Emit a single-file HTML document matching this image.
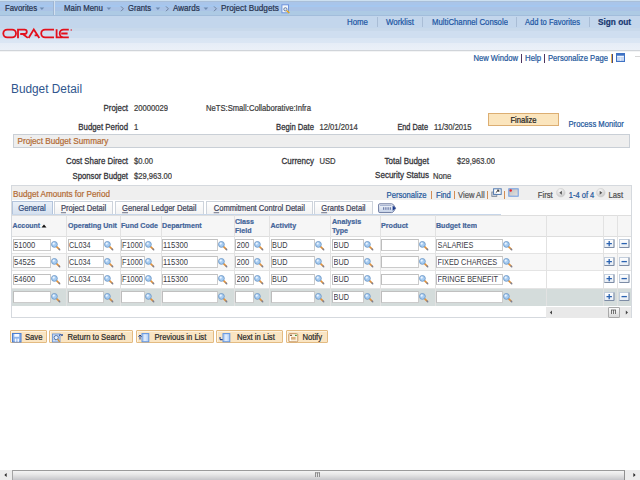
<!DOCTYPE html>
<html><head><meta charset="utf-8"><style>
html,body{margin:0;padding:0;width:640px;height:480px;overflow:hidden;background:#fff;}
.t{position:absolute;white-space:nowrap;font-family:"Liberation Sans",sans-serif;-webkit-text-stroke:0.2px currentColor;}
.r{position:absolute;display:block;}
u{text-decoration:underline;text-underline-offset:0.5px;text-decoration-thickness:0.6px;text-decoration-color:#7a7e90;}
</style></head><body>
<div class="r" style="left:0px;top:0px;width:640px;height:16px;background:linear-gradient(#cde0f0 0,#cde0f0 1px,#a9bfd9 1px,#a9bfd9 2px,#a9c5ea 2px,#a9c5ea 5px,#a5c7ef 5px,#a5c7ef 7px,#aac3e6 7px,#aac3e6 11px,#adcae4 11px,#adcae4 15px,#a2bddb 15px,#a2bddb 16px);"></div>
<div class="r" style="left:53px;top:1px;width:1px;height:14px;background:#9fb6d2;"></div>
<div class="r" style="left:54px;top:1px;width:1px;height:14px;background:#d3e0ef;"></div>
<div class="t" style="left:5px;top:3.40px;font-size:7.8px;line-height:12px;font-weight:normal;color:#27344f;transform-origin:0 8px;transform:scaleY(1.12);">Favorites</div>
<div class="t" style="left:64px;top:3.40px;font-size:7.85px;line-height:12px;font-weight:normal;color:#27344f;transform-origin:0 8px;transform:scaleY(1.12);">Main Menu</div>
<div class="t" style="left:128px;top:3.40px;font-size:7.7px;line-height:12px;font-weight:normal;color:#27344f;transform-origin:0 8px;transform:scaleY(1.12);">Grants</div>
<div class="t" style="left:173px;top:3.40px;font-size:8.1px;line-height:12px;font-weight:normal;color:#27344f;transform-origin:0 8px;transform:scaleY(1.12);">Awards</div>
<div class="t" style="left:221px;top:3.20px;font-size:8.2px;line-height:12px;font-weight:normal;color:#27344f;transform-origin:0 8px;transform:scaleY(1.12);">Project Budgets</div>
<svg class="r" style="left:38.8px;top:6.6px" width="6" height="4" viewBox="0 0 6 4"><path d="M0.6 0.5 L5.2 0.5 L2.9 3 Z" fill="#6f8db3"/></svg>
<svg class="r" style="left:106px;top:6.6px" width="6" height="4" viewBox="0 0 6 4"><path d="M0.6 0.5 L5.2 0.5 L2.9 3 Z" fill="#6f8db3"/></svg>
<svg class="r" style="left:155.2px;top:6.6px" width="6" height="4" viewBox="0 0 6 4"><path d="M0.6 0.5 L5.2 0.5 L2.9 3 Z" fill="#6f8db3"/></svg>
<svg class="r" style="left:202.8px;top:6.6px" width="6" height="4" viewBox="0 0 6 4"><path d="M0.6 0.5 L5.2 0.5 L2.9 3 Z" fill="#6f8db3"/></svg>
<svg class="r" style="left:119.5px;top:5px" width="5" height="8" viewBox="0 0 5 8"><path d="M1 1.4 L3.4 3.8 L1 6.2" fill="none" stroke="#6b7d98" stroke-width="0.95"/></svg>
<svg class="r" style="left:164.5px;top:5px" width="5" height="8" viewBox="0 0 5 8"><path d="M1 1.4 L3.4 3.8 L1 6.2" fill="none" stroke="#6b7d98" stroke-width="0.95"/></svg>
<svg class="r" style="left:212.5px;top:5px" width="5" height="8" viewBox="0 0 5 8"><path d="M1 1.4 L3.4 3.8 L1 6.2" fill="none" stroke="#6b7d98" stroke-width="0.95"/></svg>
<svg class="r" style="left:280.5px;top:3.8px" width="10" height="10" viewBox="0 0 10 10"><rect x="0.9" y="0.8" width="6.6" height="8" fill="#f4f7fc" stroke="#6d93dc" stroke-width="1"/><circle cx="4.4" cy="5.3" r="1.6" fill="#dfe8f4" stroke="#5a6f95" stroke-width="0.9"/><path d="M5.6 6.6 L8.4 9" stroke="#e8a81c" stroke-width="1.4"/></svg>
<div class="r" style="left:0px;top:16px;width:640px;height:34px;background:linear-gradient(#c3d6ec 0,#c3d6ec 11.5px,#c8d9eb 12.5px,#c9d9eb 14.5px,#cfdef0 15.5px,#cfdef0 21.5px,#d9e5f3 22.5px,#dbe6f4 26.5px,#e6edf7 27.5px,#ebf0f8 34px);"></div>
<div class="r" style="left:0px;top:50px;width:640px;height:1px;background:#d0d4d9;"></div>
<div class="r" style="left:0px;top:51px;width:640px;height:1px;background:#f3f4f5;"></div>
<svg class="r" style="left:0px;top:27px" width="74" height="13" viewBox="0 0 74 13"><g fill="none" stroke="#e3101c" stroke-width="1.8"><path d="M7.2 2.6 H12.1 A3.9 3.9 0 0 1 12.1 10.4 H7.2 A3.9 3.9 0 0 1 7.2 2.6 Z"/><path d="M18 11.2 V2.6 H24.6 A2.2 2.2 0 0 1 24.6 7 H20.2 M22.8 7 L27.8 10.9"/><path d="M28.6 11 L33.8 2.4 L39.3 11 M34.6 8.4 H37.6"/><path d="M54 10.4 H45.1 A3.9 3.9 0 0 1 45.1 2.6 H54"/><path d="M56.6 2.2 V10.4 H62.4"/><path d="M68.8 10.4 H63.6 A3.9 3.9 0 0 1 63.6 2.6 H68.8 M61.2 6.5 H67.6"/></g><circle cx="71.2" cy="3" r="0.7" fill="#e3101c"/></svg>
<div class="t" style="left:347px;top:17.10px;font-size:7.87px;line-height:12px;font-weight:normal;color:#2157a4;transform-origin:0 8px;transform:scaleY(1.12);">Home</div>
<div class="t" style="left:386px;top:17.10px;font-size:7.92px;line-height:12px;font-weight:normal;color:#2157a4;transform-origin:0 8px;transform:scaleY(1.12);">Worklist</div>
<div class="t" style="left:432px;top:17.10px;font-size:7.77px;line-height:12px;font-weight:normal;color:#2157a4;transform-origin:0 8px;transform:scaleY(1.12);">MultiChannel Console</div>
<div class="t" style="left:525px;top:17.10px;font-size:7.55px;line-height:12px;font-weight:normal;color:#2157a4;transform-origin:0 8px;transform:scaleY(1.12);">Add to Favorites</div>
<div class="t" style="left:598px;top:17.30px;font-size:8.25px;line-height:12px;font-weight:bold;color:#173670;transform-origin:0 8px;transform:scaleY(1.12);">Sign out</div>
<div class="r" style="left:377px;top:17px;width:1px;height:10px;background:#a9bdd6;"></div>
<div class="r" style="left:422px;top:17px;width:1px;height:10px;background:#a9bdd6;"></div>
<div class="r" style="left:516px;top:17px;width:1px;height:10px;background:#a9bdd6;"></div>
<div class="r" style="left:589px;top:17px;width:1px;height:10px;background:#a9bdd6;"></div>
<div class="t" style="left:473.5px;top:53.20px;font-size:7.63px;line-height:12px;font-weight:normal;color:#24589c;transform-origin:0 8px;transform:scaleY(1.12);">New Window</div>
<div class="r" style="left:521px;top:54px;width:1px;height:9px;background:#4d3560;"></div>
<div class="t" style="left:525px;top:53.20px;font-size:7.8px;line-height:12px;font-weight:normal;color:#24589c;transform-origin:0 8px;transform:scaleY(1.12);">Help</div>
<div class="r" style="left:544px;top:54px;width:1px;height:9px;background:#4d3560;"></div>
<div class="t" style="left:548px;top:53.20px;font-size:7.65px;line-height:12px;font-weight:normal;color:#24589c;transform-origin:0 8px;transform:scaleY(1.12);">Personalize Page</div>
<div class="r" style="left:611px;top:54px;width:2px;height:9px;background:linear-gradient(90deg,#e8b050 50%,#3c4c90 50%);"></div>
<svg class="r" style="left:616px;top:53px" width="9" height="9" viewBox="0 0 9 9"><rect x="0.5" y="0.5" width="8" height="8" fill="#b8cdee" stroke="#3f72c4" stroke-width="1"/><rect x="1" y="1" width="7" height="1.6" fill="#3f72c4"/><rect x="1.2" y="3.2" width="6.6" height="1" fill="#fff"/><path d="M1 6 H8 M4.5 4.5 V8" stroke="#e6eefb" stroke-width="0.8"/></svg>
<div class="r" style="left:635px;top:56px;width:5px;height:1px;background:#d6d6d6;"></div>
<div class="t" style="left:11px;top:80.50px;font-size:11.83px;line-height:16px;font-weight:normal;color:#30568e;transform-origin:0 12px;transform:scaleY(1.12);-webkit-text-stroke:0;">Budget Detail</div>
<div class="t" style="right:512px;top:103.40px;font-size:7.87px;line-height:12px;font-weight:normal;color:#333338;transform-origin:0 8px;transform:scaleY(1.12);-webkit-text-stroke:0.25px currentColor;">Project</div>
<div class="t" style="left:134px;top:103.40px;font-size:7.64px;line-height:12px;font-weight:normal;color:#3c3c3c;transform-origin:0 8px;transform:scaleY(1.12);">20000029</div>
<div class="t" style="left:206px;top:103.40px;font-size:7.65px;line-height:12px;font-weight:normal;color:#3c3c3c;transform-origin:0 8px;transform:scaleY(1.12);">NeTS:Small:Collaborative:Infra</div>
<div class="t" style="right:512px;top:121.60px;font-size:7.85px;line-height:12px;font-weight:normal;color:#333338;transform-origin:0 8px;transform:scaleY(1.12);-webkit-text-stroke:0.25px currentColor;">Budget Period</div>
<div class="t" style="left:134px;top:121.60px;font-size:7.64px;line-height:12px;font-weight:normal;color:#3c3c3c;transform-origin:0 8px;transform:scaleY(1.12);">1</div>
<div class="t" style="right:326px;top:121.60px;font-size:7.68px;line-height:12px;font-weight:normal;color:#333338;transform-origin:0 8px;transform:scaleY(1.12);-webkit-text-stroke:0.25px currentColor;">Begin Date</div>
<div class="t" style="left:319.5px;top:121.60px;font-size:7.64px;line-height:12px;font-weight:normal;color:#3c3c3c;transform-origin:0 8px;transform:scaleY(1.12);">12/01/2014</div>
<div class="t" style="right:212px;top:121.60px;font-size:7.35px;line-height:12px;font-weight:normal;color:#333338;transform-origin:0 8px;transform:scaleY(1.12);-webkit-text-stroke:0.25px currentColor;">End Date</div>
<div class="t" style="left:434px;top:121.60px;font-size:7.64px;line-height:12px;font-weight:normal;color:#3c3c3c;transform-origin:0 8px;transform:scaleY(1.12);">11/30/2015</div>
<div class="r" style="left:488px;top:113px;width:71px;height:13px;box-sizing:border-box;background:#fbe5bd;border:1px solid #dcae72;"></div>
<div class="t" style="left:523.5px;top:114.80px;font-size:7.6px;line-height:12px;font-weight:normal;color:#222;transform-origin:0 8px;transform:translateX(-50%) scaleY(1.12);">Finalize</div>
<div class="t" style="left:568.5px;top:119.00px;font-size:7.68px;line-height:12px;font-weight:normal;color:#24589c;transform-origin:0 8px;transform:scaleY(1.12);">Process Monitor</div>
<div class="r" style="left:13px;top:134px;width:617px;height:14px;box-sizing:border-box;background:#eeeeee;border:1px solid #c9cfd6;"></div>
<div class="t" style="left:17.5px;top:136.20px;font-size:8.19px;line-height:12px;font-weight:normal;color:#b36b34;transform-origin:0 8px;transform:scaleY(1.12);">Project Budget Summary</div>
<div class="t" style="right:512px;top:155.60px;font-size:7.86px;line-height:12px;font-weight:normal;color:#333338;transform-origin:0 8px;transform:scaleY(1.12);-webkit-text-stroke:0.25px currentColor;">Cost Share Direct</div>
<div class="t" style="left:134px;top:155.60px;font-size:7.64px;line-height:12px;font-weight:normal;color:#3c3c3c;transform-origin:0 8px;transform:scaleY(1.12);">$0.00</div>
<div class="t" style="right:326px;top:155.60px;font-size:8.0px;line-height:12px;font-weight:normal;color:#333338;transform-origin:0 8px;transform:scaleY(1.12);-webkit-text-stroke:0.25px currentColor;">Currency</div>
<div class="t" style="left:319.5px;top:155.60px;font-size:7.64px;line-height:12px;font-weight:normal;color:#3c3c3c;transform-origin:0 8px;transform:scaleY(1.12);">USD</div>
<div class="t" style="right:211px;top:155.60px;font-size:8.0px;line-height:12px;font-weight:normal;color:#333338;transform-origin:0 8px;transform:scaleY(1.12);-webkit-text-stroke:0.25px currentColor;">Total Budget</div>
<div class="t" style="left:457px;top:155.60px;font-size:7.59px;line-height:12px;font-weight:normal;color:#3c3c3c;transform-origin:0 8px;transform:scaleY(1.12);">$29,963.00</div>
<div class="t" style="right:512px;top:170.60px;font-size:7.74px;line-height:12px;font-weight:normal;color:#333338;transform-origin:0 8px;transform:scaleY(1.12);-webkit-text-stroke:0.25px currentColor;">Sponsor Budget</div>
<div class="t" style="left:134px;top:170.60px;font-size:7.59px;line-height:12px;font-weight:normal;color:#3c3c3c;transform-origin:0 8px;transform:scaleY(1.12);">$29,963.00</div>
<div class="t" style="right:211px;top:169.60px;font-size:8.03px;line-height:12px;font-weight:normal;color:#333338;transform-origin:0 8px;transform:scaleY(1.12);-webkit-text-stroke:0.25px currentColor;">Security Status</div>
<div class="t" style="left:433px;top:170.60px;font-size:7.64px;line-height:12px;font-weight:normal;color:#3c3c3c;transform-origin:0 8px;transform:scaleY(1.12);">None</div>
<div class="r" style="left:10.5px;top:185px;width:621.5px;height:133px;box-sizing:border-box;border:1px solid #d5d9de;background:#fff;"></div>
<div class="r" style="left:11.5px;top:186px;width:619.5px;height:14px;background:#efefef;"></div>
<div class="t" style="left:13px;top:189.00px;font-size:8.12px;line-height:12px;font-weight:normal;color:#b36b34;transform-origin:0 8px;transform:scaleY(1.12);">Budget Amounts for Period</div>
<div class="t" style="left:386.6px;top:189.50px;font-size:7.65px;line-height:12px;font-weight:normal;color:#24589c;transform-origin:0 8px;transform:scaleY(1.12);">Personalize</div>
<div class="r" style="left:431px;top:190.8px;width:1px;height:8px;background:#d38d55;"></div>
<div class="t" style="left:436px;top:189.50px;font-size:7.65px;line-height:12px;font-weight:normal;color:#24589c;transform-origin:0 8px;transform:scaleY(1.12);">Find</div>
<div class="r" style="left:454px;top:190.8px;width:1px;height:8px;background:#d38d55;"></div>
<div class="t" style="left:458px;top:189.50px;font-size:7.65px;line-height:12px;font-weight:normal;color:#555;transform-origin:0 8px;transform:scaleY(1.12);">View All</div>
<div class="r" style="left:487px;top:190.8px;width:1px;height:8px;background:#d38d55;"></div>
<svg class="r" style="left:490.5px;top:187.5px" width="11" height="9" viewBox="0 0 11 9"><rect x="0.8" y="4" width="5" height="4.5" fill="#c9ced6" stroke="#7d8796" stroke-width="0.8"/><rect x="2.6" y="0.8" width="7.6" height="5.6" fill="#ffffff" stroke="#4f78b0" stroke-width="1"/><path d="M4.8 4.6 L7.6 2.2 M6 2.2 H7.8 V4" fill="none" stroke="#222" stroke-width="0.9"/></svg>
<div class="r" style="left:504px;top:190.8px;width:1px;height:8px;background:#d38d55;"></div>
<svg class="r" style="left:507.5px;top:187.5px" width="11" height="9" viewBox="0 0 11 9"><defs><linearGradient id="sg" x1="0" y1="0" x2="1" y2="1"><stop offset="0" stop-color="#bdbdbd"/><stop offset="1" stop-color="#e4e4e4"/></linearGradient></defs><rect x="0.8" y="0.8" width="9.4" height="7.4" fill="url(#sg)" stroke="#6d9be0" stroke-width="1"/><circle cx="2.7" cy="2.5" r="1.2" fill="#e8202a"/></svg>
<div class="t" style="left:537.8px;top:189.50px;font-size:7.7px;line-height:12px;font-weight:normal;color:#505050;transform-origin:0 8px;transform:scaleY(1.12);">First</div>
<svg class="r" style="left:555.6px;top:187.6px" width="10" height="10" viewBox="0 0 10 10"><defs><radialGradient id="cg" cx="0.4" cy="0.3" r="0.75"><stop offset="0" stop-color="#fafafa"/><stop offset="1" stop-color="#c4c4c4"/></radialGradient></defs><circle cx="4.8" cy="4.7" r="4.3" fill="url(#cg)" stroke="#d0d0d0" stroke-width="0.6"/><path d="M5.9 2.7 L3.3 4.7 L5.9 6.7 Z" fill="#555"/></svg>
<div class="t" style="left:568.8px;top:189.50px;font-size:7.5px;line-height:12px;font-weight:normal;color:#24589c;transform-origin:0 8px;transform:scaleY(1.12);">1-4 of 4</div>
<svg class="r" style="left:596.3px;top:187.6px" width="10" height="10" viewBox="0 0 10 10"><defs><radialGradient id="cg2" cx="0.4" cy="0.3" r="0.75"><stop offset="0" stop-color="#fafafa"/><stop offset="1" stop-color="#c4c4c4"/></radialGradient></defs><circle cx="4.8" cy="4.7" r="4.3" fill="url(#cg2)" stroke="#d0d0d0" stroke-width="0.6"/><path d="M3.7 2.7 L6.3 4.7 L3.7 6.7 Z" fill="#555"/></svg>
<div class="t" style="left:608.5px;top:189.50px;font-size:7.7px;line-height:12px;font-weight:normal;color:#505050;transform-origin:0 8px;transform:scaleY(1.12);">Last</div>
<div class="r" style="left:11.5px;top:200px;width:489px;height:1px;background:transparent;"></div>
<div class="r" style="left:11.5px;top:200.5px;width:41.0px;height:14.5px;box-sizing:border-box;background:linear-gradient(#eaf0f8,#d3dfee);border:1px solid #b3c4dc;border-bottom:none;"></div>
<div class="t" style="left:32.0px;top:203.40px;font-size:7.75px;line-height:12px;font-weight:normal;color:#2f4c7c;transform-origin:0 8px;transform:translateX(-50%) scaleY(1.12);">General</div>
<div class="r" style="left:54px;top:201px;width:59px;height:13.5px;box-sizing:border-box;background:linear-gradient(#ffffff,#f1f1f1);border:1px solid #cdd3db;border-bottom:none;"></div>
<div class="t" style="left:83.5px;top:203.40px;font-size:7.6px;line-height:12px;font-weight:normal;color:#3e4358;transform-origin:0 8px;transform:translateX(-50%) scaleY(1.12);"><u>P</u>roject Detail</div>
<div class="r" style="left:115px;top:201px;width:88.5px;height:13.5px;box-sizing:border-box;background:linear-gradient(#ffffff,#f1f1f1);border:1px solid #cdd3db;border-bottom:none;"></div>
<div class="t" style="left:159.25px;top:203.40px;font-size:7.6px;line-height:12px;font-weight:normal;color:#3e4358;transform-origin:0 8px;transform:translateX(-50%) scaleY(1.12);"><u>G</u>eneral Ledger Detail</div>
<div class="r" style="left:206px;top:201px;width:106.5px;height:13.5px;box-sizing:border-box;background:linear-gradient(#ffffff,#f1f1f1);border:1px solid #cdd3db;border-bottom:none;"></div>
<div class="t" style="left:259.25px;top:203.40px;font-size:7.6px;line-height:12px;font-weight:normal;color:#3e4358;transform-origin:0 8px;transform:translateX(-50%) scaleY(1.12);"><u>C</u>ommitment Control Detail</div>
<div class="r" style="left:314px;top:201px;width:58.75px;height:13.5px;box-sizing:border-box;background:linear-gradient(#ffffff,#f1f1f1);border:1px solid #cdd3db;border-bottom:none;"></div>
<div class="t" style="left:343.375px;top:203.40px;font-size:7.6px;line-height:12px;font-weight:normal;color:#3e4358;transform-origin:0 8px;transform:translateX(-50%) scaleY(1.12);"><u>G</u>rants Detail</div>
<svg class="r" style="left:378px;top:202.5px" width="19" height="11" viewBox="0 0 19 11"><defs><linearGradient id="tg" x1="0" y1="0" x2="0" y2="1"><stop offset="0" stop-color="#f7f9fd"/><stop offset="1" stop-color="#c3d0e6"/></linearGradient></defs><path d="M1.8 0.8 H13.6 Q14.8 0.8 15.6 2 L17.6 5.2 L15.6 8.4 Q14.8 9.6 13.6 9.6 H1.8 Q0.6 9.6 0.6 8.4 V2 Q0.6 0.8 1.8 0.8 Z" fill="url(#tg)" stroke="#5c6b94" stroke-width="0.9"/><path d="M2 2.4 H13.5" stroke="#8ea0c4" stroke-width="0.8"/><g fill="#56679a"><rect x="5.2" y="4.2" width="1" height="2.6"/><rect x="7.4" y="4.2" width="1" height="2.6"/><rect x="9.6" y="4.2" width="1" height="2.6"/><rect x="11.8" y="4.2" width="1" height="2.6"/></g><path d="M14.6 2.6 L17.7 5.2 L14.6 7.8 Z" fill="#1b3a8c"/></svg>
<div class="r" style="left:11.5px;top:213.5px;width:489px;height:1.5px;background:#c7d6e9;"></div>
<div class="r" style="left:11.5px;top:215px;width:619.5px;height:21px;background:#f6f6f6;border-top:1px solid #dedede;box-sizing:border-box;"></div>
<div class="r" style="left:11.5px;top:235.5px;width:619.5px;height:1px;background:#dedede;"></div>
<div class="r" style="left:11.5px;top:236.5px;width:619.5px;height:16.5px;background:#ffffff;"></div>
<div class="r" style="left:11.5px;top:253px;width:619.5px;height:17.5px;background:#f7f7f7;"></div>
<div class="r" style="left:11.5px;top:270.5px;width:619.5px;height:17.5px;background:#ffffff;"></div>
<div class="r" style="left:11.5px;top:288px;width:619.5px;height:17.5px;background:#d4dcdb;"></div>
<div class="r" style="left:11.5px;top:252.5px;width:619.5px;height:1px;background:#e4e4e4;"></div>
<div class="r" style="left:11.5px;top:270.0px;width:619.5px;height:1px;background:#e4e4e4;"></div>
<div class="r" style="left:11.5px;top:287.5px;width:619.5px;height:1px;background:#e4e4e4;"></div>
<div class="r" style="left:66px;top:215px;width:1px;height:90.5px;background:#e2e2e2;"></div>
<div class="r" style="left:119.5px;top:215px;width:1px;height:90.5px;background:#e2e2e2;"></div>
<div class="r" style="left:160.5px;top:215px;width:1px;height:90.5px;background:#e2e2e2;"></div>
<div class="r" style="left:233.5px;top:215px;width:1px;height:90.5px;background:#e2e2e2;"></div>
<div class="r" style="left:269px;top:215px;width:1px;height:90.5px;background:#e2e2e2;"></div>
<div class="r" style="left:330px;top:215px;width:1px;height:90.5px;background:#e2e2e2;"></div>
<div class="r" style="left:379.5px;top:215px;width:1px;height:90.5px;background:#e2e2e2;"></div>
<div class="r" style="left:434.5px;top:215px;width:1px;height:90.5px;background:#e2e2e2;"></div>
<div class="r" style="left:545.5px;top:215px;width:1px;height:90.5px;background:#e2e2e2;"></div>
<div class="r" style="left:602.5px;top:215px;width:1px;height:90.5px;background:#e2e2e2;"></div>
<div class="r" style="left:616.5px;top:215px;width:1px;height:90.5px;background:#e2e2e2;"></div>
<div class="t" style="left:12.5px;top:220.30px;font-size:6.9px;line-height:12px;font-weight:bold;color:#44659a;transform-origin:0 8px;transform:scaleY(1.05);">Account</div>
<svg class="r" style="left:40.6px;top:224px" width="6" height="4" viewBox="0 0 6 4"><path d="M0.5 3.5 L3 0.5 L5.5 3.5 Z" fill="#111"/></svg>
<div class="t" style="left:68px;top:220.30px;font-size:7.06px;line-height:12px;font-weight:bold;color:#44659a;transform-origin:0 8px;transform:scaleY(1.05);">Operating Unit</div>
<div class="t" style="left:121px;top:220.30px;font-size:7.1px;line-height:12px;font-weight:bold;color:#44659a;transform-origin:0 8px;transform:scaleY(1.05);">Fund Code</div>
<div class="t" style="left:162px;top:220.30px;font-size:7.15px;line-height:12px;font-weight:bold;color:#44659a;transform-origin:0 8px;transform:scaleY(1.05);">Department</div>
<div class="t" style="left:235px;top:216.00px;font-size:7.1px;line-height:12px;font-weight:bold;color:#44659a;transform-origin:0 8px;transform:scaleY(1.05);">Class</div>
<div class="t" style="left:235px;top:224.50px;font-size:7.1px;line-height:12px;font-weight:bold;color:#44659a;transform-origin:0 8px;transform:scaleY(1.05);">Field</div>
<div class="t" style="left:270.5px;top:220.30px;font-size:7.1px;line-height:12px;font-weight:bold;color:#44659a;transform-origin:0 8px;transform:scaleY(1.05);">Activity</div>
<div class="t" style="left:332px;top:216.00px;font-size:7.1px;line-height:12px;font-weight:bold;color:#44659a;transform-origin:0 8px;transform:scaleY(1.05);">Analysis</div>
<div class="t" style="left:332px;top:224.50px;font-size:7.1px;line-height:12px;font-weight:bold;color:#44659a;transform-origin:0 8px;transform:scaleY(1.05);">Type</div>
<div class="t" style="left:381px;top:220.30px;font-size:7.15px;line-height:12px;font-weight:bold;color:#44659a;transform-origin:0 8px;transform:scaleY(1.05);">Product</div>
<div class="t" style="left:436px;top:220.30px;font-size:7.1px;line-height:12px;font-weight:bold;color:#44659a;transform-origin:0 8px;transform:scaleY(1.05);">Budget Item</div>
<div class="r" style="left:13px;top:239px;width:38px;height:11.5px;box-sizing:border-box;background:#fff;border:1px solid #cbcbcb;border-top-color:#c0c0c0;border-left-color:#bdbdbd;"></div>
<div class="t" style="left:14.1px;top:240.40px;font-size:7.6px;line-height:12px;font-weight:normal;color:#3a3a44;transform-origin:0 8px;transform:scaleY(1.12);width:36.0px;overflow:hidden;-webkit-text-stroke:0;">51000</div>
<svg class="r" style="left:51px;top:240.5px" width="10" height="10" viewBox="0 0 10 10"><path d="M5.3 5.3 L8.4 8.4" stroke="#e0923c" stroke-width="1.7" stroke-linecap="round"/><path d="M7.9 7.9 L8.8 8.8" stroke="#6a7fa8" stroke-width="1.2" stroke-linecap="round"/><circle cx="3.4" cy="3.4" r="2.9" fill="#a8cdf2" stroke="#6f98c6" stroke-width="0.9"/><circle cx="2.7" cy="2.6" r="1.1" fill="#eef6ff"/></svg>
<div class="r" style="left:68px;top:239px;width:36px;height:11.5px;box-sizing:border-box;background:#fff;border:1px solid #cbcbcb;border-top-color:#c0c0c0;border-left-color:#bdbdbd;"></div>
<div class="t" style="left:69.1px;top:240.40px;font-size:7.3px;line-height:12px;font-weight:normal;color:#3a3a44;transform-origin:0 8px;transform:scaleY(1.12);width:34.0px;overflow:hidden;-webkit-text-stroke:0;">CL034</div>
<svg class="r" style="left:104px;top:240.5px" width="10" height="10" viewBox="0 0 10 10"><path d="M5.3 5.3 L8.4 8.4" stroke="#e0923c" stroke-width="1.7" stroke-linecap="round"/><path d="M7.9 7.9 L8.8 8.8" stroke="#6a7fa8" stroke-width="1.2" stroke-linecap="round"/><circle cx="3.4" cy="3.4" r="2.9" fill="#a8cdf2" stroke="#6f98c6" stroke-width="0.9"/><circle cx="2.7" cy="2.6" r="1.1" fill="#eef6ff"/></svg>
<div class="r" style="left:121px;top:239px;width:24px;height:11.5px;box-sizing:border-box;background:#fff;border:1px solid #cbcbcb;border-top-color:#c0c0c0;border-left-color:#bdbdbd;"></div>
<div class="t" style="left:122.1px;top:240.40px;font-size:7.3px;line-height:12px;font-weight:normal;color:#3a3a44;transform-origin:0 8px;transform:scaleY(1.12);width:22.0px;overflow:hidden;-webkit-text-stroke:0;">F1000</div>
<svg class="r" style="left:145px;top:240.5px" width="10" height="10" viewBox="0 0 10 10"><path d="M5.3 5.3 L8.4 8.4" stroke="#e0923c" stroke-width="1.7" stroke-linecap="round"/><path d="M7.9 7.9 L8.8 8.8" stroke="#6a7fa8" stroke-width="1.2" stroke-linecap="round"/><circle cx="3.4" cy="3.4" r="2.9" fill="#a8cdf2" stroke="#6f98c6" stroke-width="0.9"/><circle cx="2.7" cy="2.6" r="1.1" fill="#eef6ff"/></svg>
<div class="r" style="left:162px;top:239px;width:56px;height:11.5px;box-sizing:border-box;background:#fff;border:1px solid #cbcbcb;border-top-color:#c0c0c0;border-left-color:#bdbdbd;"></div>
<div class="t" style="left:163.1px;top:240.40px;font-size:7.6px;line-height:12px;font-weight:normal;color:#3a3a44;transform-origin:0 8px;transform:scaleY(1.12);width:54.0px;overflow:hidden;-webkit-text-stroke:0;">115300</div>
<svg class="r" style="left:218px;top:240.5px" width="10" height="10" viewBox="0 0 10 10"><path d="M5.3 5.3 L8.4 8.4" stroke="#e0923c" stroke-width="1.7" stroke-linecap="round"/><path d="M7.9 7.9 L8.8 8.8" stroke="#6a7fa8" stroke-width="1.2" stroke-linecap="round"/><circle cx="3.4" cy="3.4" r="2.9" fill="#a8cdf2" stroke="#6f98c6" stroke-width="0.9"/><circle cx="2.7" cy="2.6" r="1.1" fill="#eef6ff"/></svg>
<div class="r" style="left:235px;top:239px;width:19px;height:11.5px;box-sizing:border-box;background:#fff;border:1px solid #cbcbcb;border-top-color:#c0c0c0;border-left-color:#bdbdbd;"></div>
<div class="t" style="left:236.6px;top:240.40px;font-size:7.6px;line-height:12px;font-weight:normal;color:#3a3a44;transform-origin:0 8px;transform:scaleY(1.12);width:16.5px;overflow:hidden;-webkit-text-stroke:0;">200</div>
<svg class="r" style="left:254px;top:240.5px" width="10" height="10" viewBox="0 0 10 10"><path d="M5.3 5.3 L8.4 8.4" stroke="#e0923c" stroke-width="1.7" stroke-linecap="round"/><path d="M7.9 7.9 L8.8 8.8" stroke="#6a7fa8" stroke-width="1.2" stroke-linecap="round"/><circle cx="3.4" cy="3.4" r="2.9" fill="#a8cdf2" stroke="#6f98c6" stroke-width="0.9"/><circle cx="2.7" cy="2.6" r="1.1" fill="#eef6ff"/></svg>
<div class="r" style="left:271px;top:239px;width:44px;height:11.5px;box-sizing:border-box;background:#fff;border:1px solid #cbcbcb;border-top-color:#c0c0c0;border-left-color:#bdbdbd;"></div>
<div class="t" style="left:272.1px;top:240.40px;font-size:7.3px;line-height:12px;font-weight:normal;color:#3a3a44;transform-origin:0 8px;transform:scaleY(1.12);width:42.25px;overflow:hidden;-webkit-text-stroke:0;">BUD</div>
<svg class="r" style="left:315px;top:240.5px" width="10" height="10" viewBox="0 0 10 10"><path d="M5.3 5.3 L8.4 8.4" stroke="#e0923c" stroke-width="1.7" stroke-linecap="round"/><path d="M7.9 7.9 L8.8 8.8" stroke="#6a7fa8" stroke-width="1.2" stroke-linecap="round"/><circle cx="3.4" cy="3.4" r="2.9" fill="#a8cdf2" stroke="#6f98c6" stroke-width="0.9"/><circle cx="2.7" cy="2.6" r="1.1" fill="#eef6ff"/></svg>
<div class="r" style="left:332px;top:239px;width:32px;height:11.5px;box-sizing:border-box;background:#fff;border:1px solid #cbcbcb;border-top-color:#c0c0c0;border-left-color:#bdbdbd;"></div>
<div class="t" style="left:333.6px;top:240.40px;font-size:7.3px;line-height:12px;font-weight:normal;color:#3a3a44;transform-origin:0 8px;transform:scaleY(1.12);width:29.75px;overflow:hidden;-webkit-text-stroke:0;">BUD</div>
<svg class="r" style="left:364px;top:240.5px" width="10" height="10" viewBox="0 0 10 10"><path d="M5.3 5.3 L8.4 8.4" stroke="#e0923c" stroke-width="1.7" stroke-linecap="round"/><path d="M7.9 7.9 L8.8 8.8" stroke="#6a7fa8" stroke-width="1.2" stroke-linecap="round"/><circle cx="3.4" cy="3.4" r="2.9" fill="#a8cdf2" stroke="#6f98c6" stroke-width="0.9"/><circle cx="2.7" cy="2.6" r="1.1" fill="#eef6ff"/></svg>
<div class="r" style="left:381px;top:239px;width:38px;height:11.5px;box-sizing:border-box;background:#fff;border:1px solid #cbcbcb;border-top-color:#c0c0c0;border-left-color:#bdbdbd;"></div>
<svg class="r" style="left:419px;top:240.5px" width="10" height="10" viewBox="0 0 10 10"><path d="M5.3 5.3 L8.4 8.4" stroke="#e0923c" stroke-width="1.7" stroke-linecap="round"/><path d="M7.9 7.9 L8.8 8.8" stroke="#6a7fa8" stroke-width="1.2" stroke-linecap="round"/><circle cx="3.4" cy="3.4" r="2.9" fill="#a8cdf2" stroke="#6f98c6" stroke-width="0.9"/><circle cx="2.7" cy="2.6" r="1.1" fill="#eef6ff"/></svg>
<div class="r" style="left:436px;top:239px;width:67px;height:11.5px;box-sizing:border-box;background:#fff;border:1px solid #cbcbcb;border-top-color:#c0c0c0;border-left-color:#bdbdbd;"></div>
<div class="t" style="left:437.6px;top:240.40px;font-size:7.3px;line-height:12px;font-weight:normal;color:#3a3a44;transform-origin:0 8px;transform:scaleY(1.12);width:64.75px;overflow:hidden;-webkit-text-stroke:0;">SALARIES</div>
<svg class="r" style="left:503px;top:240.5px" width="10" height="10" viewBox="0 0 10 10"><path d="M5.3 5.3 L8.4 8.4" stroke="#e0923c" stroke-width="1.7" stroke-linecap="round"/><path d="M7.9 7.9 L8.8 8.8" stroke="#6a7fa8" stroke-width="1.2" stroke-linecap="round"/><circle cx="3.4" cy="3.4" r="2.9" fill="#a8cdf2" stroke="#6f98c6" stroke-width="0.9"/><circle cx="2.7" cy="2.6" r="1.1" fill="#eef6ff"/></svg>
<svg class="r" style="left:604.3px;top:238.8px" width="11" height="10" viewBox="0 0 11 10"><defs><linearGradient id="pg" x1="0" y1="0" x2="0" y2="1"><stop offset="0" stop-color="#ffffff"/><stop offset="1" stop-color="#e6ecf4"/></linearGradient></defs><rect x="0.5" y="0.5" width="9.5" height="8" fill="url(#pg)" stroke="#c3cedc" stroke-width="1"/><path d="M10 0.5 V8.5 H0.5" fill="none" stroke="#7d8ca5" stroke-width="1"/><path d="M5.2 1.9 V7.3 M2.5 4.6 H7.9" stroke="#2a62b0" stroke-width="1.3"/></svg>
<svg class="r" style="left:618.5px;top:238.8px" width="11" height="10" viewBox="0 0 11 10"><defs><linearGradient id="pg" x1="0" y1="0" x2="0" y2="1"><stop offset="0" stop-color="#ffffff"/><stop offset="1" stop-color="#e6ecf4"/></linearGradient></defs><rect x="0.5" y="0.5" width="9.5" height="8" fill="url(#pg)" stroke="#c3cedc" stroke-width="1"/><path d="M10 0.5 V8.5 H0.5" fill="none" stroke="#7d8ca5" stroke-width="1"/><path d="M2.5 4.6 H7.9" stroke="#2a62b0" stroke-width="1.3"/></svg>
<div class="r" style="left:13px;top:256px;width:38px;height:11.5px;box-sizing:border-box;background:#fff;border:1px solid #cbcbcb;border-top-color:#c0c0c0;border-left-color:#bdbdbd;"></div>
<div class="t" style="left:14.1px;top:256.90px;font-size:7.6px;line-height:12px;font-weight:normal;color:#3a3a44;transform-origin:0 8px;transform:scaleY(1.12);width:36.0px;overflow:hidden;-webkit-text-stroke:0;">54525</div>
<svg class="r" style="left:51px;top:257.5px" width="10" height="10" viewBox="0 0 10 10"><path d="M5.3 5.3 L8.4 8.4" stroke="#e0923c" stroke-width="1.7" stroke-linecap="round"/><path d="M7.9 7.9 L8.8 8.8" stroke="#6a7fa8" stroke-width="1.2" stroke-linecap="round"/><circle cx="3.4" cy="3.4" r="2.9" fill="#a8cdf2" stroke="#6f98c6" stroke-width="0.9"/><circle cx="2.7" cy="2.6" r="1.1" fill="#eef6ff"/></svg>
<div class="r" style="left:68px;top:256px;width:36px;height:11.5px;box-sizing:border-box;background:#fff;border:1px solid #cbcbcb;border-top-color:#c0c0c0;border-left-color:#bdbdbd;"></div>
<div class="t" style="left:69.1px;top:256.90px;font-size:7.3px;line-height:12px;font-weight:normal;color:#3a3a44;transform-origin:0 8px;transform:scaleY(1.12);width:34.0px;overflow:hidden;-webkit-text-stroke:0;">CL034</div>
<svg class="r" style="left:104px;top:257.5px" width="10" height="10" viewBox="0 0 10 10"><path d="M5.3 5.3 L8.4 8.4" stroke="#e0923c" stroke-width="1.7" stroke-linecap="round"/><path d="M7.9 7.9 L8.8 8.8" stroke="#6a7fa8" stroke-width="1.2" stroke-linecap="round"/><circle cx="3.4" cy="3.4" r="2.9" fill="#a8cdf2" stroke="#6f98c6" stroke-width="0.9"/><circle cx="2.7" cy="2.6" r="1.1" fill="#eef6ff"/></svg>
<div class="r" style="left:121px;top:256px;width:24px;height:11.5px;box-sizing:border-box;background:#fff;border:1px solid #cbcbcb;border-top-color:#c0c0c0;border-left-color:#bdbdbd;"></div>
<div class="t" style="left:122.1px;top:256.90px;font-size:7.3px;line-height:12px;font-weight:normal;color:#3a3a44;transform-origin:0 8px;transform:scaleY(1.12);width:22.0px;overflow:hidden;-webkit-text-stroke:0;">F1000</div>
<svg class="r" style="left:145px;top:257.5px" width="10" height="10" viewBox="0 0 10 10"><path d="M5.3 5.3 L8.4 8.4" stroke="#e0923c" stroke-width="1.7" stroke-linecap="round"/><path d="M7.9 7.9 L8.8 8.8" stroke="#6a7fa8" stroke-width="1.2" stroke-linecap="round"/><circle cx="3.4" cy="3.4" r="2.9" fill="#a8cdf2" stroke="#6f98c6" stroke-width="0.9"/><circle cx="2.7" cy="2.6" r="1.1" fill="#eef6ff"/></svg>
<div class="r" style="left:162px;top:256px;width:56px;height:11.5px;box-sizing:border-box;background:#fff;border:1px solid #cbcbcb;border-top-color:#c0c0c0;border-left-color:#bdbdbd;"></div>
<div class="t" style="left:163.1px;top:256.90px;font-size:7.6px;line-height:12px;font-weight:normal;color:#3a3a44;transform-origin:0 8px;transform:scaleY(1.12);width:54.0px;overflow:hidden;-webkit-text-stroke:0;">115300</div>
<svg class="r" style="left:218px;top:257.5px" width="10" height="10" viewBox="0 0 10 10"><path d="M5.3 5.3 L8.4 8.4" stroke="#e0923c" stroke-width="1.7" stroke-linecap="round"/><path d="M7.9 7.9 L8.8 8.8" stroke="#6a7fa8" stroke-width="1.2" stroke-linecap="round"/><circle cx="3.4" cy="3.4" r="2.9" fill="#a8cdf2" stroke="#6f98c6" stroke-width="0.9"/><circle cx="2.7" cy="2.6" r="1.1" fill="#eef6ff"/></svg>
<div class="r" style="left:235px;top:256px;width:19px;height:11.5px;box-sizing:border-box;background:#fff;border:1px solid #cbcbcb;border-top-color:#c0c0c0;border-left-color:#bdbdbd;"></div>
<div class="t" style="left:236.6px;top:256.90px;font-size:7.6px;line-height:12px;font-weight:normal;color:#3a3a44;transform-origin:0 8px;transform:scaleY(1.12);width:16.5px;overflow:hidden;-webkit-text-stroke:0;">200</div>
<svg class="r" style="left:254px;top:257.5px" width="10" height="10" viewBox="0 0 10 10"><path d="M5.3 5.3 L8.4 8.4" stroke="#e0923c" stroke-width="1.7" stroke-linecap="round"/><path d="M7.9 7.9 L8.8 8.8" stroke="#6a7fa8" stroke-width="1.2" stroke-linecap="round"/><circle cx="3.4" cy="3.4" r="2.9" fill="#a8cdf2" stroke="#6f98c6" stroke-width="0.9"/><circle cx="2.7" cy="2.6" r="1.1" fill="#eef6ff"/></svg>
<div class="r" style="left:271px;top:256px;width:44px;height:11.5px;box-sizing:border-box;background:#fff;border:1px solid #cbcbcb;border-top-color:#c0c0c0;border-left-color:#bdbdbd;"></div>
<div class="t" style="left:272.1px;top:256.90px;font-size:7.3px;line-height:12px;font-weight:normal;color:#3a3a44;transform-origin:0 8px;transform:scaleY(1.12);width:42.25px;overflow:hidden;-webkit-text-stroke:0;">BUD</div>
<svg class="r" style="left:315px;top:257.5px" width="10" height="10" viewBox="0 0 10 10"><path d="M5.3 5.3 L8.4 8.4" stroke="#e0923c" stroke-width="1.7" stroke-linecap="round"/><path d="M7.9 7.9 L8.8 8.8" stroke="#6a7fa8" stroke-width="1.2" stroke-linecap="round"/><circle cx="3.4" cy="3.4" r="2.9" fill="#a8cdf2" stroke="#6f98c6" stroke-width="0.9"/><circle cx="2.7" cy="2.6" r="1.1" fill="#eef6ff"/></svg>
<div class="r" style="left:332px;top:256px;width:32px;height:11.5px;box-sizing:border-box;background:#fff;border:1px solid #cbcbcb;border-top-color:#c0c0c0;border-left-color:#bdbdbd;"></div>
<div class="t" style="left:333.6px;top:256.90px;font-size:7.3px;line-height:12px;font-weight:normal;color:#3a3a44;transform-origin:0 8px;transform:scaleY(1.12);width:29.75px;overflow:hidden;-webkit-text-stroke:0;">BUD</div>
<svg class="r" style="left:364px;top:257.5px" width="10" height="10" viewBox="0 0 10 10"><path d="M5.3 5.3 L8.4 8.4" stroke="#e0923c" stroke-width="1.7" stroke-linecap="round"/><path d="M7.9 7.9 L8.8 8.8" stroke="#6a7fa8" stroke-width="1.2" stroke-linecap="round"/><circle cx="3.4" cy="3.4" r="2.9" fill="#a8cdf2" stroke="#6f98c6" stroke-width="0.9"/><circle cx="2.7" cy="2.6" r="1.1" fill="#eef6ff"/></svg>
<div class="r" style="left:381px;top:256px;width:38px;height:11.5px;box-sizing:border-box;background:#fff;border:1px solid #cbcbcb;border-top-color:#c0c0c0;border-left-color:#bdbdbd;"></div>
<svg class="r" style="left:419px;top:257.5px" width="10" height="10" viewBox="0 0 10 10"><path d="M5.3 5.3 L8.4 8.4" stroke="#e0923c" stroke-width="1.7" stroke-linecap="round"/><path d="M7.9 7.9 L8.8 8.8" stroke="#6a7fa8" stroke-width="1.2" stroke-linecap="round"/><circle cx="3.4" cy="3.4" r="2.9" fill="#a8cdf2" stroke="#6f98c6" stroke-width="0.9"/><circle cx="2.7" cy="2.6" r="1.1" fill="#eef6ff"/></svg>
<div class="r" style="left:436px;top:256px;width:67px;height:11.5px;box-sizing:border-box;background:#fff;border:1px solid #cbcbcb;border-top-color:#c0c0c0;border-left-color:#bdbdbd;"></div>
<div class="t" style="left:437.6px;top:256.90px;font-size:7.3px;line-height:12px;font-weight:normal;color:#3a3a44;transform-origin:0 8px;transform:scaleY(1.12);width:64.75px;overflow:hidden;-webkit-text-stroke:0;">FIXED CHARGES</div>
<svg class="r" style="left:503px;top:257.5px" width="10" height="10" viewBox="0 0 10 10"><path d="M5.3 5.3 L8.4 8.4" stroke="#e0923c" stroke-width="1.7" stroke-linecap="round"/><path d="M7.9 7.9 L8.8 8.8" stroke="#6a7fa8" stroke-width="1.2" stroke-linecap="round"/><circle cx="3.4" cy="3.4" r="2.9" fill="#a8cdf2" stroke="#6f98c6" stroke-width="0.9"/><circle cx="2.7" cy="2.6" r="1.1" fill="#eef6ff"/></svg>
<svg class="r" style="left:604.3px;top:256.5px" width="11" height="10" viewBox="0 0 11 10"><defs><linearGradient id="pg" x1="0" y1="0" x2="0" y2="1"><stop offset="0" stop-color="#ffffff"/><stop offset="1" stop-color="#e6ecf4"/></linearGradient></defs><rect x="0.5" y="0.5" width="9.5" height="8" fill="url(#pg)" stroke="#c3cedc" stroke-width="1"/><path d="M10 0.5 V8.5 H0.5" fill="none" stroke="#7d8ca5" stroke-width="1"/><path d="M5.2 1.9 V7.3 M2.5 4.6 H7.9" stroke="#2a62b0" stroke-width="1.3"/></svg>
<svg class="r" style="left:618.5px;top:256.5px" width="11" height="10" viewBox="0 0 11 10"><defs><linearGradient id="pg" x1="0" y1="0" x2="0" y2="1"><stop offset="0" stop-color="#ffffff"/><stop offset="1" stop-color="#e6ecf4"/></linearGradient></defs><rect x="0.5" y="0.5" width="9.5" height="8" fill="url(#pg)" stroke="#c3cedc" stroke-width="1"/><path d="M10 0.5 V8.5 H0.5" fill="none" stroke="#7d8ca5" stroke-width="1"/><path d="M2.5 4.6 H7.9" stroke="#2a62b0" stroke-width="1.3"/></svg>
<div class="r" style="left:13px;top:273.5px;width:38px;height:11.5px;box-sizing:border-box;background:#fff;border:1px solid #cbcbcb;border-top-color:#c0c0c0;border-left-color:#bdbdbd;"></div>
<div class="t" style="left:14.1px;top:274.40px;font-size:7.6px;line-height:12px;font-weight:normal;color:#3a3a44;transform-origin:0 8px;transform:scaleY(1.12);width:36.0px;overflow:hidden;-webkit-text-stroke:0;">54600</div>
<svg class="r" style="left:51px;top:275.0px" width="10" height="10" viewBox="0 0 10 10"><path d="M5.3 5.3 L8.4 8.4" stroke="#e0923c" stroke-width="1.7" stroke-linecap="round"/><path d="M7.9 7.9 L8.8 8.8" stroke="#6a7fa8" stroke-width="1.2" stroke-linecap="round"/><circle cx="3.4" cy="3.4" r="2.9" fill="#a8cdf2" stroke="#6f98c6" stroke-width="0.9"/><circle cx="2.7" cy="2.6" r="1.1" fill="#eef6ff"/></svg>
<div class="r" style="left:68px;top:273.5px;width:36px;height:11.5px;box-sizing:border-box;background:#fff;border:1px solid #cbcbcb;border-top-color:#c0c0c0;border-left-color:#bdbdbd;"></div>
<div class="t" style="left:69.1px;top:274.40px;font-size:7.3px;line-height:12px;font-weight:normal;color:#3a3a44;transform-origin:0 8px;transform:scaleY(1.12);width:34.0px;overflow:hidden;-webkit-text-stroke:0;">CL034</div>
<svg class="r" style="left:104px;top:275.0px" width="10" height="10" viewBox="0 0 10 10"><path d="M5.3 5.3 L8.4 8.4" stroke="#e0923c" stroke-width="1.7" stroke-linecap="round"/><path d="M7.9 7.9 L8.8 8.8" stroke="#6a7fa8" stroke-width="1.2" stroke-linecap="round"/><circle cx="3.4" cy="3.4" r="2.9" fill="#a8cdf2" stroke="#6f98c6" stroke-width="0.9"/><circle cx="2.7" cy="2.6" r="1.1" fill="#eef6ff"/></svg>
<div class="r" style="left:121px;top:273.5px;width:24px;height:11.5px;box-sizing:border-box;background:#fff;border:1px solid #cbcbcb;border-top-color:#c0c0c0;border-left-color:#bdbdbd;"></div>
<div class="t" style="left:122.1px;top:274.40px;font-size:7.3px;line-height:12px;font-weight:normal;color:#3a3a44;transform-origin:0 8px;transform:scaleY(1.12);width:22.0px;overflow:hidden;-webkit-text-stroke:0;">F1000</div>
<svg class="r" style="left:145px;top:275.0px" width="10" height="10" viewBox="0 0 10 10"><path d="M5.3 5.3 L8.4 8.4" stroke="#e0923c" stroke-width="1.7" stroke-linecap="round"/><path d="M7.9 7.9 L8.8 8.8" stroke="#6a7fa8" stroke-width="1.2" stroke-linecap="round"/><circle cx="3.4" cy="3.4" r="2.9" fill="#a8cdf2" stroke="#6f98c6" stroke-width="0.9"/><circle cx="2.7" cy="2.6" r="1.1" fill="#eef6ff"/></svg>
<div class="r" style="left:162px;top:273.5px;width:56px;height:11.5px;box-sizing:border-box;background:#fff;border:1px solid #cbcbcb;border-top-color:#c0c0c0;border-left-color:#bdbdbd;"></div>
<div class="t" style="left:163.1px;top:274.40px;font-size:7.6px;line-height:12px;font-weight:normal;color:#3a3a44;transform-origin:0 8px;transform:scaleY(1.12);width:54.0px;overflow:hidden;-webkit-text-stroke:0;">115300</div>
<svg class="r" style="left:218px;top:275.0px" width="10" height="10" viewBox="0 0 10 10"><path d="M5.3 5.3 L8.4 8.4" stroke="#e0923c" stroke-width="1.7" stroke-linecap="round"/><path d="M7.9 7.9 L8.8 8.8" stroke="#6a7fa8" stroke-width="1.2" stroke-linecap="round"/><circle cx="3.4" cy="3.4" r="2.9" fill="#a8cdf2" stroke="#6f98c6" stroke-width="0.9"/><circle cx="2.7" cy="2.6" r="1.1" fill="#eef6ff"/></svg>
<div class="r" style="left:235px;top:273.5px;width:19px;height:11.5px;box-sizing:border-box;background:#fff;border:1px solid #cbcbcb;border-top-color:#c0c0c0;border-left-color:#bdbdbd;"></div>
<div class="t" style="left:236.6px;top:274.40px;font-size:7.6px;line-height:12px;font-weight:normal;color:#3a3a44;transform-origin:0 8px;transform:scaleY(1.12);width:16.5px;overflow:hidden;-webkit-text-stroke:0;">200</div>
<svg class="r" style="left:254px;top:275.0px" width="10" height="10" viewBox="0 0 10 10"><path d="M5.3 5.3 L8.4 8.4" stroke="#e0923c" stroke-width="1.7" stroke-linecap="round"/><path d="M7.9 7.9 L8.8 8.8" stroke="#6a7fa8" stroke-width="1.2" stroke-linecap="round"/><circle cx="3.4" cy="3.4" r="2.9" fill="#a8cdf2" stroke="#6f98c6" stroke-width="0.9"/><circle cx="2.7" cy="2.6" r="1.1" fill="#eef6ff"/></svg>
<div class="r" style="left:271px;top:273.5px;width:44px;height:11.5px;box-sizing:border-box;background:#fff;border:1px solid #cbcbcb;border-top-color:#c0c0c0;border-left-color:#bdbdbd;"></div>
<div class="t" style="left:272.1px;top:274.40px;font-size:7.3px;line-height:12px;font-weight:normal;color:#3a3a44;transform-origin:0 8px;transform:scaleY(1.12);width:42.25px;overflow:hidden;-webkit-text-stroke:0;">BUD</div>
<svg class="r" style="left:315px;top:275.0px" width="10" height="10" viewBox="0 0 10 10"><path d="M5.3 5.3 L8.4 8.4" stroke="#e0923c" stroke-width="1.7" stroke-linecap="round"/><path d="M7.9 7.9 L8.8 8.8" stroke="#6a7fa8" stroke-width="1.2" stroke-linecap="round"/><circle cx="3.4" cy="3.4" r="2.9" fill="#a8cdf2" stroke="#6f98c6" stroke-width="0.9"/><circle cx="2.7" cy="2.6" r="1.1" fill="#eef6ff"/></svg>
<div class="r" style="left:332px;top:273.5px;width:32px;height:11.5px;box-sizing:border-box;background:#fff;border:1px solid #cbcbcb;border-top-color:#c0c0c0;border-left-color:#bdbdbd;"></div>
<div class="t" style="left:333.6px;top:274.40px;font-size:7.3px;line-height:12px;font-weight:normal;color:#3a3a44;transform-origin:0 8px;transform:scaleY(1.12);width:29.75px;overflow:hidden;-webkit-text-stroke:0;">BUD</div>
<svg class="r" style="left:364px;top:275.0px" width="10" height="10" viewBox="0 0 10 10"><path d="M5.3 5.3 L8.4 8.4" stroke="#e0923c" stroke-width="1.7" stroke-linecap="round"/><path d="M7.9 7.9 L8.8 8.8" stroke="#6a7fa8" stroke-width="1.2" stroke-linecap="round"/><circle cx="3.4" cy="3.4" r="2.9" fill="#a8cdf2" stroke="#6f98c6" stroke-width="0.9"/><circle cx="2.7" cy="2.6" r="1.1" fill="#eef6ff"/></svg>
<div class="r" style="left:381px;top:273.5px;width:38px;height:11.5px;box-sizing:border-box;background:#fff;border:1px solid #cbcbcb;border-top-color:#c0c0c0;border-left-color:#bdbdbd;"></div>
<svg class="r" style="left:419px;top:275.0px" width="10" height="10" viewBox="0 0 10 10"><path d="M5.3 5.3 L8.4 8.4" stroke="#e0923c" stroke-width="1.7" stroke-linecap="round"/><path d="M7.9 7.9 L8.8 8.8" stroke="#6a7fa8" stroke-width="1.2" stroke-linecap="round"/><circle cx="3.4" cy="3.4" r="2.9" fill="#a8cdf2" stroke="#6f98c6" stroke-width="0.9"/><circle cx="2.7" cy="2.6" r="1.1" fill="#eef6ff"/></svg>
<div class="r" style="left:436px;top:273.5px;width:67px;height:11.5px;box-sizing:border-box;background:#fff;border:1px solid #cbcbcb;border-top-color:#c0c0c0;border-left-color:#bdbdbd;"></div>
<div class="t" style="left:437.6px;top:274.40px;font-size:7.3px;line-height:12px;font-weight:normal;color:#3a3a44;transform-origin:0 8px;transform:scaleY(1.12);width:64.75px;overflow:hidden;-webkit-text-stroke:0;">FRINGE BENEFIT</div>
<svg class="r" style="left:503px;top:275.0px" width="10" height="10" viewBox="0 0 10 10"><path d="M5.3 5.3 L8.4 8.4" stroke="#e0923c" stroke-width="1.7" stroke-linecap="round"/><path d="M7.9 7.9 L8.8 8.8" stroke="#6a7fa8" stroke-width="1.2" stroke-linecap="round"/><circle cx="3.4" cy="3.4" r="2.9" fill="#a8cdf2" stroke="#6f98c6" stroke-width="0.9"/><circle cx="2.7" cy="2.6" r="1.1" fill="#eef6ff"/></svg>
<svg class="r" style="left:604.3px;top:273.9px" width="11" height="10" viewBox="0 0 11 10"><defs><linearGradient id="pg" x1="0" y1="0" x2="0" y2="1"><stop offset="0" stop-color="#ffffff"/><stop offset="1" stop-color="#e6ecf4"/></linearGradient></defs><rect x="0.5" y="0.5" width="9.5" height="8" fill="url(#pg)" stroke="#c3cedc" stroke-width="1"/><path d="M10 0.5 V8.5 H0.5" fill="none" stroke="#7d8ca5" stroke-width="1"/><path d="M5.2 1.9 V7.3 M2.5 4.6 H7.9" stroke="#2a62b0" stroke-width="1.3"/></svg>
<svg class="r" style="left:618.5px;top:273.9px" width="11" height="10" viewBox="0 0 11 10"><defs><linearGradient id="pg" x1="0" y1="0" x2="0" y2="1"><stop offset="0" stop-color="#ffffff"/><stop offset="1" stop-color="#e6ecf4"/></linearGradient></defs><rect x="0.5" y="0.5" width="9.5" height="8" fill="url(#pg)" stroke="#c3cedc" stroke-width="1"/><path d="M10 0.5 V8.5 H0.5" fill="none" stroke="#7d8ca5" stroke-width="1"/><path d="M2.5 4.6 H7.9" stroke="#2a62b0" stroke-width="1.3"/></svg>
<div class="r" style="left:13px;top:291px;width:38px;height:11.5px;box-sizing:border-box;background:#fff;border:1px solid #cbcbcb;border-top-color:#c0c0c0;border-left-color:#bdbdbd;"></div>
<svg class="r" style="left:51px;top:292.5px" width="10" height="10" viewBox="0 0 10 10"><path d="M5.3 5.3 L8.4 8.4" stroke="#e0923c" stroke-width="1.7" stroke-linecap="round"/><path d="M7.9 7.9 L8.8 8.8" stroke="#6a7fa8" stroke-width="1.2" stroke-linecap="round"/><circle cx="3.4" cy="3.4" r="2.9" fill="#a8cdf2" stroke="#6f98c6" stroke-width="0.9"/><circle cx="2.7" cy="2.6" r="1.1" fill="#eef6ff"/></svg>
<div class="r" style="left:68px;top:291px;width:36px;height:11.5px;box-sizing:border-box;background:#fff;border:1px solid #cbcbcb;border-top-color:#c0c0c0;border-left-color:#bdbdbd;"></div>
<svg class="r" style="left:104px;top:292.5px" width="10" height="10" viewBox="0 0 10 10"><path d="M5.3 5.3 L8.4 8.4" stroke="#e0923c" stroke-width="1.7" stroke-linecap="round"/><path d="M7.9 7.9 L8.8 8.8" stroke="#6a7fa8" stroke-width="1.2" stroke-linecap="round"/><circle cx="3.4" cy="3.4" r="2.9" fill="#a8cdf2" stroke="#6f98c6" stroke-width="0.9"/><circle cx="2.7" cy="2.6" r="1.1" fill="#eef6ff"/></svg>
<div class="r" style="left:121px;top:291px;width:24px;height:11.5px;box-sizing:border-box;background:#fff;border:1px solid #cbcbcb;border-top-color:#c0c0c0;border-left-color:#bdbdbd;"></div>
<svg class="r" style="left:145px;top:292.5px" width="10" height="10" viewBox="0 0 10 10"><path d="M5.3 5.3 L8.4 8.4" stroke="#e0923c" stroke-width="1.7" stroke-linecap="round"/><path d="M7.9 7.9 L8.8 8.8" stroke="#6a7fa8" stroke-width="1.2" stroke-linecap="round"/><circle cx="3.4" cy="3.4" r="2.9" fill="#a8cdf2" stroke="#6f98c6" stroke-width="0.9"/><circle cx="2.7" cy="2.6" r="1.1" fill="#eef6ff"/></svg>
<div class="r" style="left:162px;top:291px;width:56px;height:11.5px;box-sizing:border-box;background:#fff;border:1px solid #cbcbcb;border-top-color:#c0c0c0;border-left-color:#bdbdbd;"></div>
<svg class="r" style="left:218px;top:292.5px" width="10" height="10" viewBox="0 0 10 10"><path d="M5.3 5.3 L8.4 8.4" stroke="#e0923c" stroke-width="1.7" stroke-linecap="round"/><path d="M7.9 7.9 L8.8 8.8" stroke="#6a7fa8" stroke-width="1.2" stroke-linecap="round"/><circle cx="3.4" cy="3.4" r="2.9" fill="#a8cdf2" stroke="#6f98c6" stroke-width="0.9"/><circle cx="2.7" cy="2.6" r="1.1" fill="#eef6ff"/></svg>
<div class="r" style="left:235px;top:291px;width:19px;height:11.5px;box-sizing:border-box;background:#fff;border:1px solid #cbcbcb;border-top-color:#c0c0c0;border-left-color:#bdbdbd;"></div>
<svg class="r" style="left:254px;top:292.5px" width="10" height="10" viewBox="0 0 10 10"><path d="M5.3 5.3 L8.4 8.4" stroke="#e0923c" stroke-width="1.7" stroke-linecap="round"/><path d="M7.9 7.9 L8.8 8.8" stroke="#6a7fa8" stroke-width="1.2" stroke-linecap="round"/><circle cx="3.4" cy="3.4" r="2.9" fill="#a8cdf2" stroke="#6f98c6" stroke-width="0.9"/><circle cx="2.7" cy="2.6" r="1.1" fill="#eef6ff"/></svg>
<div class="r" style="left:271px;top:291px;width:44px;height:11.5px;box-sizing:border-box;background:#fff;border:1px solid #cbcbcb;border-top-color:#c0c0c0;border-left-color:#bdbdbd;"></div>
<svg class="r" style="left:315px;top:292.5px" width="10" height="10" viewBox="0 0 10 10"><path d="M5.3 5.3 L8.4 8.4" stroke="#e0923c" stroke-width="1.7" stroke-linecap="round"/><path d="M7.9 7.9 L8.8 8.8" stroke="#6a7fa8" stroke-width="1.2" stroke-linecap="round"/><circle cx="3.4" cy="3.4" r="2.9" fill="#a8cdf2" stroke="#6f98c6" stroke-width="0.9"/><circle cx="2.7" cy="2.6" r="1.1" fill="#eef6ff"/></svg>
<div class="r" style="left:332px;top:291px;width:32px;height:11.5px;box-sizing:border-box;background:#fff;border:1px solid #cbcbcb;border-top-color:#c0c0c0;border-left-color:#bdbdbd;"></div>
<div class="t" style="left:333.6px;top:291.90px;font-size:7.3px;line-height:12px;font-weight:normal;color:#3a3a44;transform-origin:0 8px;transform:scaleY(1.12);width:29.75px;overflow:hidden;-webkit-text-stroke:0;">BUD</div>
<svg class="r" style="left:364px;top:292.5px" width="10" height="10" viewBox="0 0 10 10"><path d="M5.3 5.3 L8.4 8.4" stroke="#e0923c" stroke-width="1.7" stroke-linecap="round"/><path d="M7.9 7.9 L8.8 8.8" stroke="#6a7fa8" stroke-width="1.2" stroke-linecap="round"/><circle cx="3.4" cy="3.4" r="2.9" fill="#a8cdf2" stroke="#6f98c6" stroke-width="0.9"/><circle cx="2.7" cy="2.6" r="1.1" fill="#eef6ff"/></svg>
<div class="r" style="left:381px;top:291px;width:38px;height:11.5px;box-sizing:border-box;background:#fff;border:1px solid #cbcbcb;border-top-color:#c0c0c0;border-left-color:#bdbdbd;"></div>
<svg class="r" style="left:419px;top:292.5px" width="10" height="10" viewBox="0 0 10 10"><path d="M5.3 5.3 L8.4 8.4" stroke="#e0923c" stroke-width="1.7" stroke-linecap="round"/><path d="M7.9 7.9 L8.8 8.8" stroke="#6a7fa8" stroke-width="1.2" stroke-linecap="round"/><circle cx="3.4" cy="3.4" r="2.9" fill="#a8cdf2" stroke="#6f98c6" stroke-width="0.9"/><circle cx="2.7" cy="2.6" r="1.1" fill="#eef6ff"/></svg>
<div class="r" style="left:436px;top:291px;width:67px;height:11.5px;box-sizing:border-box;background:#fff;border:1px solid #cbcbcb;border-top-color:#c0c0c0;border-left-color:#bdbdbd;"></div>
<svg class="r" style="left:503px;top:292.5px" width="10" height="10" viewBox="0 0 10 10"><path d="M5.3 5.3 L8.4 8.4" stroke="#e0923c" stroke-width="1.7" stroke-linecap="round"/><path d="M7.9 7.9 L8.8 8.8" stroke="#6a7fa8" stroke-width="1.2" stroke-linecap="round"/><circle cx="3.4" cy="3.4" r="2.9" fill="#a8cdf2" stroke="#6f98c6" stroke-width="0.9"/><circle cx="2.7" cy="2.6" r="1.1" fill="#eef6ff"/></svg>
<svg class="r" style="left:604.3px;top:291.5px" width="11" height="10" viewBox="0 0 11 10"><defs><linearGradient id="pg" x1="0" y1="0" x2="0" y2="1"><stop offset="0" stop-color="#ffffff"/><stop offset="1" stop-color="#e6ecf4"/></linearGradient></defs><rect x="0.5" y="0.5" width="9.5" height="8" fill="url(#pg)" stroke="#c3cedc" stroke-width="1"/><path d="M10 0.5 V8.5 H0.5" fill="none" stroke="#7d8ca5" stroke-width="1"/><path d="M5.2 1.9 V7.3 M2.5 4.6 H7.9" stroke="#2a62b0" stroke-width="1.3"/></svg>
<svg class="r" style="left:618.5px;top:291.5px" width="11" height="10" viewBox="0 0 11 10"><defs><linearGradient id="pg" x1="0" y1="0" x2="0" y2="1"><stop offset="0" stop-color="#ffffff"/><stop offset="1" stop-color="#e6ecf4"/></linearGradient></defs><rect x="0.5" y="0.5" width="9.5" height="8" fill="url(#pg)" stroke="#c3cedc" stroke-width="1"/><path d="M10 0.5 V8.5 H0.5" fill="none" stroke="#7d8ca5" stroke-width="1"/><path d="M2.5 4.6 H7.9" stroke="#2a62b0" stroke-width="1.3"/></svg>
<div class="r" style="left:546px;top:307px;width:85px;height:10.5px;background:#e9e9e9;"></div>
<svg class="r" style="left:548px;top:309px" width="6" height="7" viewBox="0 0 6 7"><path d="M4 1.5 L1.8 3.5 L4 5.5 Z" fill="#444"/></svg>
<div class="r" style="left:607.5px;top:307px;width:12px;height:10.5px;box-sizing:border-box;background:linear-gradient(#fafafa,#d9d9d9);border:1px solid #a9a9a9;border-radius:1px;"></div>
<svg class="r" style="left:610px;top:309px" width="7" height="6" viewBox="0 0 7 6"><path d="M1.5 1 V5 M3.5 1 V5 M5.5 1 V5" stroke="#555" stroke-width="0.8"/><path d="M1 1 H6" stroke="#555" stroke-width="0.8"/></svg>
<svg class="r" style="left:624px;top:309px" width="6" height="7" viewBox="0 0 6 7"><path d="M1.8 1.5 L4 3.5 L1.8 5.5 Z" fill="#444"/></svg>
<div class="r" style="left:9.5px;top:330.3px;width:37.5px;height:13.2px;box-sizing:border-box;background:#fae5c3;border:1px solid #e3bb82;border-radius:1px;box-shadow:inset 1px 1px 0 #fdf3e2;"></div>
<div class="t" style="left:25px;top:332.30px;font-size:7.65px;line-height:12px;font-weight:normal;color:#2a2a2a;transform-origin:0 8px;transform:scaleY(1.12);">Save</div>
<div class="r" style="left:49px;top:330.3px;width:84px;height:13.2px;box-sizing:border-box;background:#fae5c3;border:1px solid #e3bb82;border-radius:1px;box-shadow:inset 1px 1px 0 #fdf3e2;"></div>
<div class="t" style="left:67.5px;top:332.30px;font-size:7.65px;line-height:12px;font-weight:normal;color:#2a2a2a;transform-origin:0 8px;transform:scaleY(1.12);">Return to Search</div>
<div class="r" style="left:135.5px;top:330.3px;width:78.5px;height:13.2px;box-sizing:border-box;background:#fae5c3;border:1px solid #e3bb82;border-radius:1px;box-shadow:inset 1px 1px 0 #fdf3e2;"></div>
<div class="t" style="left:154.5px;top:332.30px;font-size:7.65px;line-height:12px;font-weight:normal;color:#2a2a2a;transform-origin:0 8px;transform:scaleY(1.12);">Previous in List</div>
<div class="r" style="left:216px;top:330.3px;width:67px;height:13.2px;box-sizing:border-box;background:#fae5c3;border:1px solid #e3bb82;border-radius:1px;box-shadow:inset 1px 1px 0 #fdf3e2;"></div>
<div class="t" style="left:237px;top:332.30px;font-size:7.65px;line-height:12px;font-weight:normal;color:#2a2a2a;transform-origin:0 8px;transform:scaleY(1.12);">Next in List</div>
<div class="r" style="left:285.5px;top:330.3px;width:42.5px;height:13.2px;box-sizing:border-box;background:#fae5c3;border:1px solid #e3bb82;border-radius:1px;box-shadow:inset 1px 1px 0 #fdf3e2;"></div>
<div class="t" style="left:302.5px;top:332.30px;font-size:7.65px;line-height:12px;font-weight:normal;color:#2a2a2a;transform-origin:0 8px;transform:scaleY(1.12);">Notify</div>
<svg class="r" style="left:11.5px;top:332.5px" width="10" height="10" viewBox="0 0 10 10"><rect x="0.5" y="0.5" width="8.5" height="8.5" fill="#8fb4ea" stroke="#4d7fd2" stroke-width="1"/><rect x="2.3" y="1" width="4.8" height="2.8" fill="#f4f8ff"/><rect x="2.8" y="5.6" width="1.6" height="3.2" fill="#f4f8ff"/><rect x="5.4" y="5.6" width="1.6" height="3.2" fill="#f4f8ff"/></svg>
<svg class="r" style="left:52px;top:332.5px" width="11" height="10" viewBox="0 0 11 10"><rect x="0.5" y="1" width="7.5" height="8" fill="#cfe0f7" stroke="#6b95d6" stroke-width="0.9"/><path d="M1 4 H8 M1 6.5 H8 M3.5 1 V9 M6 1 V9" stroke="#9dbbe6" stroke-width="0.6"/><circle cx="4.2" cy="4.6" r="2.1" fill="#e8f2ff" stroke="#4f6f9f" stroke-width="0.9"/><path d="M5.7 6.2 L7.6 8.8" stroke="#d89030" stroke-width="1.3"/><path d="M7 2.6 Q8.2 0.6 10.3 2.2" fill="none" stroke="#23479a" stroke-width="1"/><path d="M9.2 2.6 L10.6 2.4 L10.2 1" fill="none" stroke="#23479a" stroke-width="0.8"/></svg>
<svg class="r" style="left:137.5px;top:333px" width="12" height="10" viewBox="0 0 12 10"><rect x="4" y="0.6" width="6.8" height="8.2" fill="#bcd5f7" stroke="#5f93e0" stroke-width="1"/><rect x="6" y="1.5" width="2.5" height="6.5" fill="#dce9fb"/><path d="M2 6.5 V2.2 M0.4 3.6 L2 2 L3.6 3.6" fill="none" stroke="#1d3f8c" stroke-width="1"/></svg>
<svg class="r" style="left:218.5px;top:333px" width="12" height="10" viewBox="0 0 12 10"><rect x="4" y="0.6" width="6.8" height="8.2" fill="#bcd5f7" stroke="#5f93e0" stroke-width="1"/><rect x="6" y="1.5" width="2.5" height="6.5" fill="#dce9fb"/><path d="M3.6 6.6 H1 M1 4 V6.6" fill="none" stroke="#1d3f8c" stroke-width="1.1"/></svg>
<svg class="r" style="left:287.5px;top:333px" width="11" height="10" viewBox="0 0 11 10"><rect x="0.8" y="0.6" width="9" height="8.2" rx="1.2" fill="#fbf0dc" stroke="#c89a6a" stroke-width="1"/><rect x="2" y="1.8" width="2" height="1" fill="#6a4020"/><rect x="7" y="1.8" width="1.8" height="1.2" fill="#3a9a40"/><rect x="3" y="4" width="4.6" height="2.6" fill="#d9b080"/><rect x="2" y="3" width="1" height="5" fill="#fff"/></svg>
<div class="r" style="left:0px;top:469.5px;width:640px;height:10.5px;background:#ececec;"></div>
<div class="r" style="left:11.5px;top:469.5px;width:613px;height:10.5px;box-sizing:border-box;background:linear-gradient(#f4f4f4 0,#e9e9e9 35%,#c6c6ca 100%);border-top:1px solid #9b9b9b;border-left:1px solid #a5a5a5;border-right:1px solid #8f8f8f;"></div>
<svg class="r" style="left:3px;top:472px" width="5" height="6" viewBox="0 0 5 6"><path d="M3.6 1 L1.4 3 L3.6 5 Z" fill="#222"/></svg>
<svg class="r" style="left:632px;top:472px" width="5" height="6" viewBox="0 0 5 6"><path d="M1.4 1 L3.6 3 L1.4 5 Z" fill="#222"/></svg>
<svg class="r" style="left:314px;top:472px" width="7" height="6" viewBox="0 0 7 6"><path d="M1.5 0.5 V5 M3.5 0.5 V5 M5.5 0.5 V5 M1 0.8 H6" stroke="#7a7a7a" stroke-width="0.8"/></svg>
</body></html>
